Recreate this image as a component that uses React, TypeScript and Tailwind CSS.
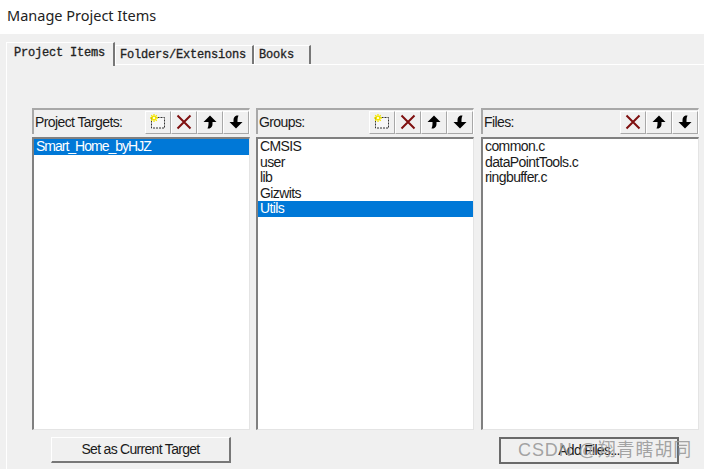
const uiFont = { fontFamily: '"Liberation Sans", Arial, sans-serif' };

function NewIcon() {
  return (
    <svg width="16" height="16" viewBox="0 0 16 16">
      <rect x="1.5" y="3.5" width="13" height="10.5" fill="#f7f7f7" stroke="#333" strokeWidth="1" strokeDasharray="2 1" />
      <path d="M4 0v8M0 4h8M1.2 1.2l5.6 5.6M6.8 1.2l-5.6 5.6" stroke="#f5e600" strokeWidth="1.3" />
      <rect x="3" y="3" width="2" height="2" fill="#fffdd0" />
    </svg>
  );
}

function DeleteIcon() {
  return (
    <svg width="16" height="16" viewBox="0 0 16 16">
      <path d="M1.5 1.5L14.5 14.5M14.5 1.5L1.5 14.5" stroke="#7f1010" strokeWidth="2" />
    </svg>
  );
}

function UpIcon() {
  return (
    <svg width="16" height="16" viewBox="0 0 16 16">
      <path d="M8 1.5L14.5 8H10.5V10C10.5 12 9.5 14 7.5 14.5H5.5C6.2 13 6.5 11.5 6.5 10V8H1.5Z" fill="#000" />
    </svg>
  );
}

function DownIcon() {
  return (
    <svg width="16" height="16" viewBox="0 0 16 16">
      <path d="M8 14.5L1.5 8H5.5V6C5.5 4 6.5 2 8.5 1.5H10.5C9.8 3 9.5 4.5 9.5 6V8H14.5Z" fill="#000" />
    </svg>
  );
}

function ToolButton({ children }: { children: React.ReactNode }) {
  return (
    <div className="flex h-[23px] w-[26px] items-center justify-center border-r border-b border-r-[#a8a8a8] border-b-[#a8a8a8] border-t border-l border-t-white border-l-white">
      {children}
    </div>
  );
}

type PanelProps = {
  label: string;
  canAdd?: boolean;
  items: string[];
  selected: string;
  className: string;
};

function Panel({ label, canAdd = true, items, selected, className }: PanelProps) {
  return (
    <section className={`flex flex-col ${className}`}>
      <header className="flex h-[26px] items-center justify-between border-t-2 border-l-2 border-t-[#a8a8a8] border-l-[#a8a8a8] border-r border-r-white">
        <span className="pl-[1px] text-[14px] tracking-[-0.6px] text-[#1a1a1a]">{label}</span>
        <div className="flex">
          {canAdd && (
            <ToolButton>
              <NewIcon />
            </ToolButton>
          )}
          <ToolButton>
            <DeleteIcon />
          </ToolButton>
          <ToolButton>
            <UpIcon />
          </ToolButton>
          <ToolButton>
            <DownIcon />
          </ToolButton>
        </div>
      </header>
      <ul className="mt-[3px] h-[293px] border-t-2 border-l-2 border-t-[#808080] border-l-[#808080] border-r border-b border-r-[#e4e4e4] border-b-[#e4e4e4] bg-white">
        {items.map((item) => (
          <li
            key={item}
            className={`h-[15.5px] pl-[2px] text-[14px] leading-[15.5px] tracking-[-0.6px] ${
              item === selected ? "bg-[#0078d7] text-white" : "text-[#1a1a1a]"
            }`}
          >
            {item}
          </li>
        ))}
      </ul>
    </section>
  );
}

function Tab({ label, active, className }: { label: string; active?: boolean; className: string }) {
  return (
    <div
      className={`flex items-center border-r-2 border-r-[#777777] border-l border-l-white border-t border-t-white ${
        active ? "relative z-10 -mb-[2px] h-[24px] bg-[#f0f0f0] pb-[3px] pl-[7px]" : "h-[19px] pl-[4px]"
      } ${className}`}
    >
      <span className="font-['Liberation_Mono',monospace] text-[12px] tracking-[-0.2px] text-[#222222] [-webkit-text-stroke:0.3px_#222222]">
        {label}
      </span>
    </div>
  );
}

export default function App() {
  return (
    <div className="relative flex h-[469px] w-[704px] flex-col overflow-hidden bg-white" style={uiFont}>
      <h1 className="flex h-[34px] items-center pb-[2px] pl-[7px] text-[14.5px] font-normal text-[#222222]" style={{ fontFamily: '"Noto Sans", sans-serif' }}>
        Manage Project Items
      </h1>
      <main className="flex flex-1 flex-col bg-[#f0f0f0] pl-[6px]">
        <div className="flex h-[30px] items-end">
          <Tab label="Project Items" active className="w-[109px]" />
          <Tab label="Folders/Extensions" className="w-[139px]" />
          <Tab label="Books" className="w-[57px]" />
        </div>
        <div className="flex-1 border-t border-l border-t-white border-l-white pt-[43px] pl-[25px]">
          <div className="flex">
            <Panel
              className="w-[218px] [&_li]:tracking-[-1px]"
              label="Project Targets:"
              items={["Smart_Home_byHJZ"]}
              selected="Smart_Home_byHJZ"
            />
            <Panel
              className="ml-[6px] w-[218px]"
              label="Groups:"
              items={["CMSIS", "user", "lib", "Gizwits", "Utils"]}
              selected="Utils"
            />
            <Panel
              className="ml-[7px] w-[218px]"
              label="Files:"
              canAdd={false}
              items={["common.c", "dataPointTools.c", "ringbuffer.c"]}
              selected=""
            />
          </div>
          <div className="mt-[7px] flex pl-[19px]">
            <button className="h-[26px] w-[180px] border-t border-l border-t-white border-l-white border-r-2 border-b-2 border-r-[#777777] border-b-[#777777] text-[14px] tracking-[-0.7px] text-[#1a1a1a]">
              Set as Current Target
            </button>
            <button className="ml-[268px] h-[27px] w-[180px] border-2 border-[#6a6a6a] text-[14px] tracking-[-0.7px] text-[#1a1a1a]">
              Add Files...
            </button>
          </div>
        </div>
      </main>
      <span
        className="absolute top-[438px] left-[518px] text-[18px] leading-[24px] tracking-[0.9px] text-[#999999]/90"
        style={{ fontFamily: '"Liberation Sans", "Noto Sans CJK SC", sans-serif' }}
      >
        CSDN @翔青瞎胡同
      </span>
    </div>
  );
}
